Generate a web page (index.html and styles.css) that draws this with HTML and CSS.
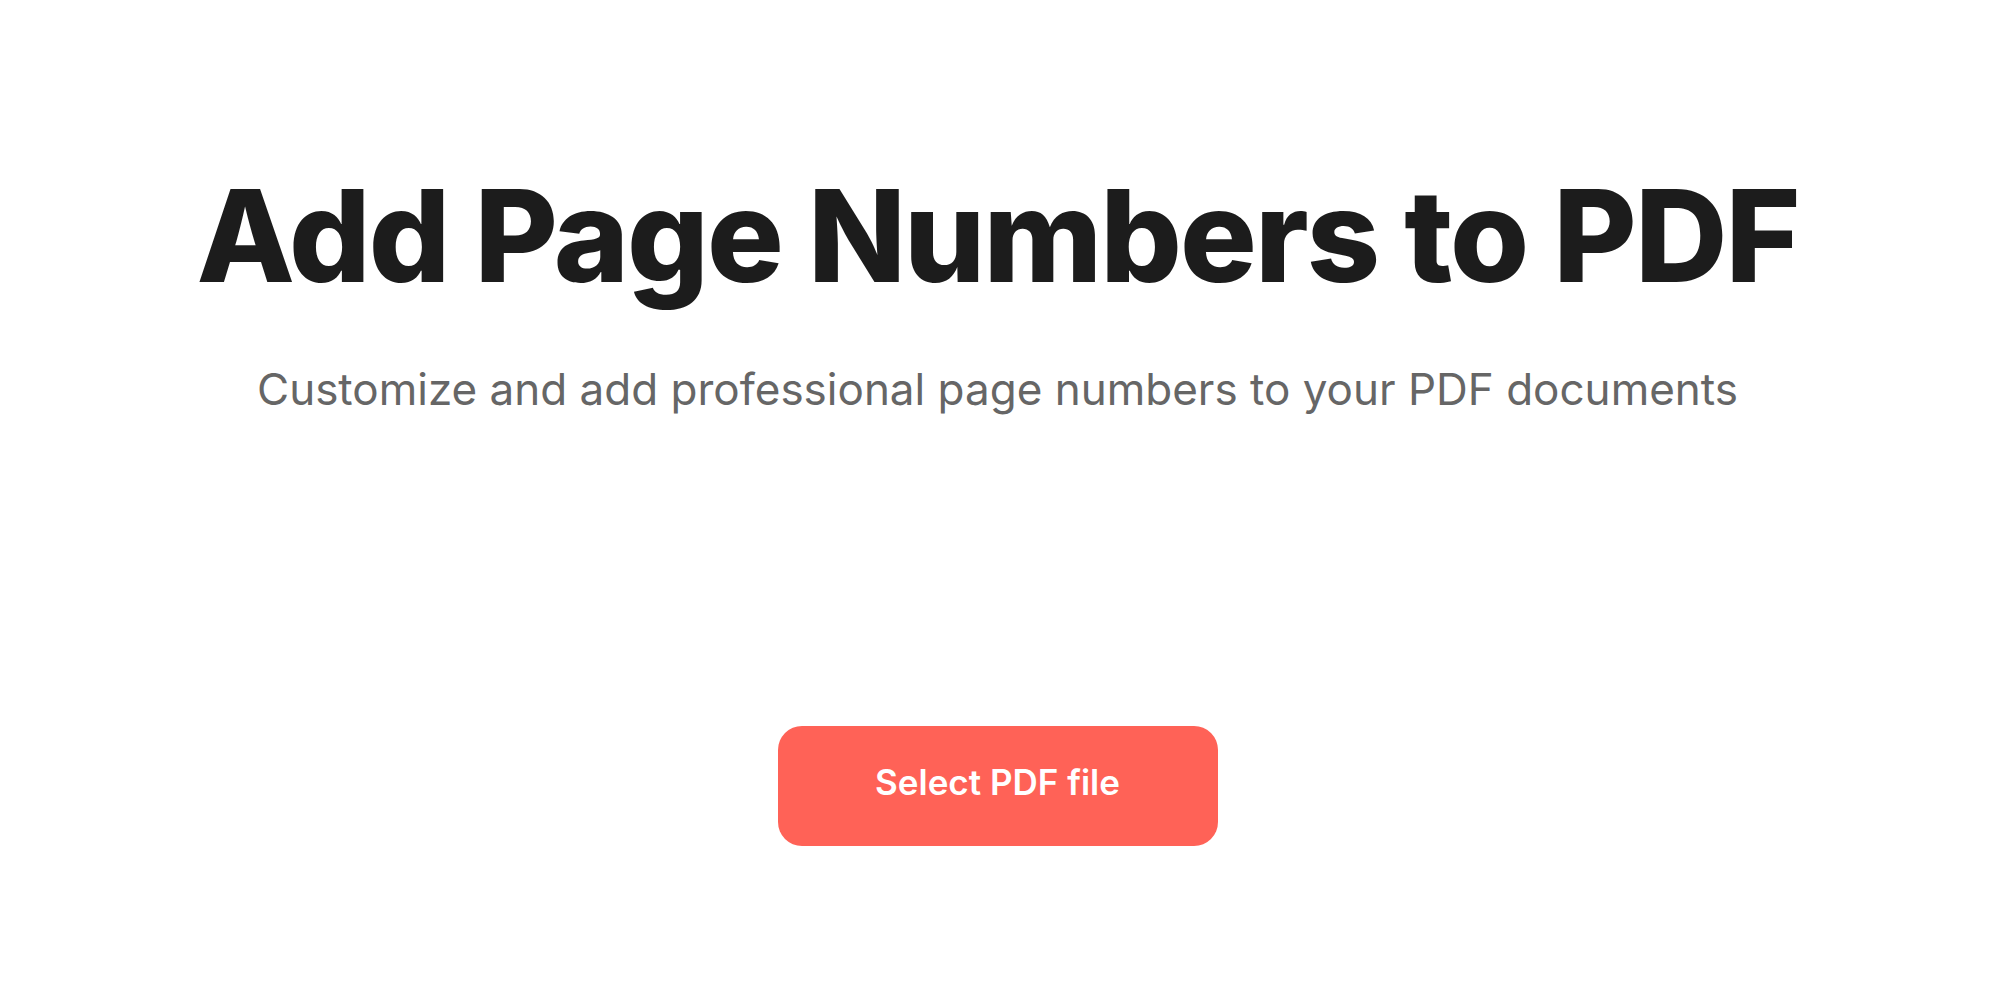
FILE: index.html
```html
<!DOCTYPE html>
<html lang="en">
  <head>
    <meta charset="UTF-8" />
    <meta name="viewport" content="width=device-width, initial-scale=1.0" />
    <title>Add Page Numbers to PDF</title>
    <link rel="stylesheet" href="styles.css">
  </head>
  <body>
    <main class="hero">
      <h1 class="hero-title">Add Page Numbers to PDF</h1>
      <p class="hero-sub">Customize and add professional page numbers to your PDF documents</p>

      <div class="upload">
        <button type="button" class="upload-btn">Select PDF file</button>
        <input type="file" id="file" accept="application/pdf" hidden />
      </div>
    </main>
    <script>
      var btn = document.querySelector(".upload-btn");
      var file = document.getElementById("file");
      btn.onclick = function () {
        file.click();
      };
    </script>
  </body>
</html>
```

FILE: styles.css
```css
* {
  margin: 0;
  box-sizing: border-box;
}
body {
  background: #fff;
  font-family: Inter, "Liberation Sans", sans-serif;
}
.hero {
  display: flex;
  flex-direction: column;
  align-items: center;
  padding-top: 172px;
  text-align: center;
}
.hero-title {
  font-size: 128px;
  line-height: 1;
  font-weight: 800;
  letter-spacing: -0.015em;
  color: #1c1c1c;
}
.hero-sub {
  margin-top: 56px;
  font-size: 44px;
  line-height: 1.5;
  font-weight: 400;
  color: #666;
}
.upload {
  margin-top: 304px;
}
.upload-btn {
  width: 440px;
  height: 120px;
  padding-bottom: 9px;
  border: none;
  border-radius: 24px;
  background: #ff6257;
  color: #fff;
  font-family: inherit;
  font-size: 35px;
  font-weight: 600;
  cursor: pointer;
}
```
